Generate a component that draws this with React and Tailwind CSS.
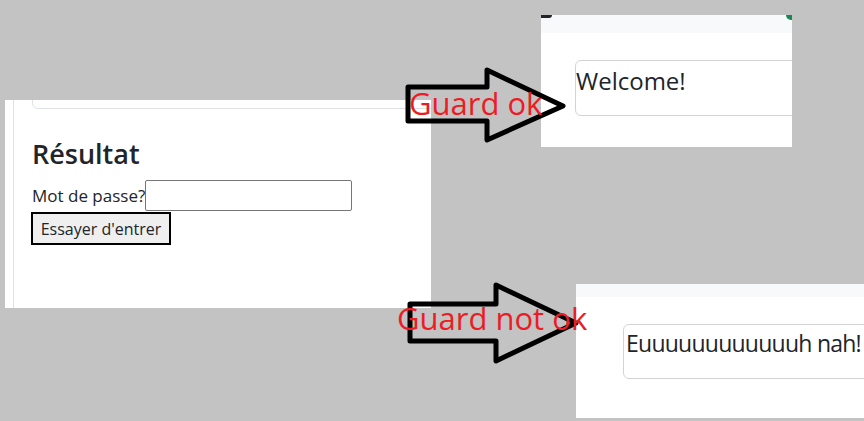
import React from "react";

const font = { fontFamily: '"Open Sans", "Noto Sans", sans-serif' };

function Arrow({ points }) {
  return (
    <polygon
      points={points}
      fill="none"
      stroke="#000"
      strokeWidth="5"
      strokeLinejoin="round"
    />
  );
}

function LoginPanel() {
  return (
    <div className="absolute left-[5px] top-[100px] w-[426px] h-[208px] bg-white overflow-hidden">
      <div className="ml-[8px] flex h-full flex-col items-start border-l border-[#dee2e6] pl-[18px] text-[#212529]">
        <div className="-mt-[40px] h-[49px] w-[520px] shrink-0 rounded-md border border-[#dee2e6]" />
        <h3 className="mt-[29px] text-[27px] font-semibold leading-[1.2]">Résultat</h3>
        <div className="mt-[10px] flex items-center text-[17px] leading-none">
          <label>Mot de passe?</label>
          <input
            type="text"
            className="h-[31px] w-[207px] rounded-[2px] border border-[#767676] bg-white"
          />
        </div>
        <button className="-ml-[1px] mt-[1px] h-[33px] w-[140px] border-2 border-black bg-[#efefef] text-[16px] leading-none">
          Essayer d'entrer
        </button>
      </div>
    </div>
  );
}

function ResultShot({ className, boxClass, text, corners }) {
  return (
    <div className={"absolute bg-white overflow-hidden " + className}>
      {corners ? (
        <div className="relative h-[18px] bg-[#f8f9fa]">
          <span className="absolute left-0 top-0 h-[3px] w-[11px] rounded-br-full bg-[#212529]" />
          <span className="absolute right-0 top-0 h-[5px] w-[6px] rounded-bl-full bg-[#198754]" />
        </div>
      ) : (
        <div className="h-[13px] bg-[#f8f9fa]" />
      )}
      <div className={"rounded-md border border-[#d3d3d3] leading-[1.2] text-[#212529] whitespace-nowrap " + boxClass}>
        {text}
      </div>
    </div>
  );
}

export default function App() {
  return (
    <div className="relative w-[864px] h-[421px] overflow-hidden bg-[#c3c3c3]" style={font}>
      <LoginPanel />
      <ResultShot
        corners
        className="left-[541px] top-[15px] w-[251px] h-[132px]"
        boxClass="ml-[34px] mt-[27px] h-[56px] w-[260px] pt-[6px] text-[24px]"
        text="Welcome!"
      />
      <ResultShot
        className="left-[576px] top-[284px] w-[288px] h-[134px]"
        boxClass="ml-[47px] mt-[27px] h-[55px] w-[300px] pl-[2px] pt-[5px] text-[23px] tracking-[-0.75px]"
        text={"E" + "uuuu" + "uuuu" + "uuuu" + "h nah!"}
      />
      <svg className="absolute left-0 top-0" width="864" height="421">
        <Arrow points="408,87 487,87 487,70 563,106 487,140 487,121 408,121" />
        <Arrow points="410,304 496,304 496,285 576,323 496,361 496,341 410,341" />
      </svg>
      <div className="absolute left-[409px] top-[85px] text-[31px] leading-[1.2] text-[#ed1c24] whitespace-nowrap">
        Guard ok
      </div>
      <div className="absolute left-[397px] top-[300px] text-[31px] leading-[1.2] text-[#ed1c24] whitespace-nowrap">
        Guard not ok
      </div>
    </div>
  );
}
